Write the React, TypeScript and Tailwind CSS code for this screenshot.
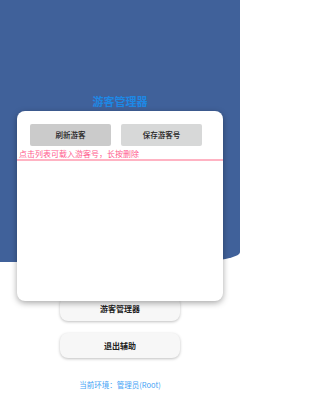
import React from 'react';

const font = { fontFamily: '"Noto Sans CJK SC", "Noto Sans", sans-serif' };

export default function App() {
  return (
    <div className="relative w-[240px] h-[400px] bg-white overflow-hidden" style={font}>
      {/* blue header background */}
      <div className="absolute left-0 top-0 w-[240px] h-[262px] bg-[#40619a] rounded-br-[50px_10px]" />

      {/* page content */}
      <div className="relative flex flex-col items-center pt-[296px]">
        <button className="w-[120px] h-[25px] rounded-[8px] bg-[#f7f7f7] shadow-[0_1px_3px_rgba(0,0,0,0.25)] text-[8px] font-bold text-[#222]">
          游客管理器
        </button>
        <button className="mt-[12px] w-[120px] h-[25px] rounded-[8px] bg-[#f7f7f7] shadow-[0_1px_3px_rgba(0,0,0,0.25)] text-[8px] font-bold text-[#222]">
          退出辅助
        </button>
        <div className="mt-[21px] text-[7.5px] text-[#45a3f5]">当前环境：管理员(Root)</div>
      </div>

      {/* dialog */}
      <div className="absolute left-0 top-[94px] w-[240px] text-center text-[11px] font-bold leading-[14px] text-[#1e88e5]">
        游客管理器
      </div>
      <div className="absolute left-[17px] top-[111px] w-[206px] h-[190px] rounded-[8px] bg-white shadow-[0_2px_6px_rgba(0,0,0,0.35)] flex flex-col">
        <div className="flex gap-[10px] px-[13px] pt-[13px]">
          <button className="w-[81px] h-[22px] bg-[#cbcbcb] rounded-[2px] text-[7.5px] font-medium text-[#222]">刷新游客</button>
          <button className="w-[81px] h-[22px] bg-[#d7d8d8] rounded-[2px] text-[7.5px] font-medium text-[#222]">保存游客号</button>
        </div>
        <div className="mt-[2px] pl-[2px] text-[8px] leading-[11px] text-[#ff5c8d]">点击列表可载入游客号，长按删除</div>
        <div className="h-[1.5px] bg-[#ffb3c3]" />
      </div>
    </div>
  );
}
